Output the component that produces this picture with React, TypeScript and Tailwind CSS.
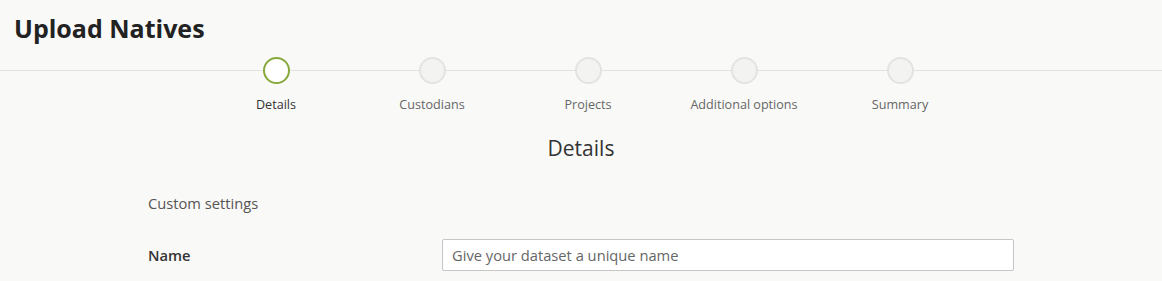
export default function App() {
  const steps = ["Details", "Custodians", "Projects", "Additional options", "Summary"];
  return (
    <div className="min-h-[281px] w-full bg-[#f9f9f8] text-[#333]" style={{ fontFamily: '"Open Sans", sans-serif' }}>
      <div className="h-[71px] border-b border-[#e1e1df] pl-[14px] pt-[11px]">
        <h1 className="text-[25px] font-bold leading-[34px] text-[#222]">Upload Natives</h1>
      </div>
      <div className="-mt-[14px] ml-[198px] flex">
        {steps.map((s, i) => (
          <div key={s} className="flex w-[156px] flex-col items-center">
            <div
              className={
                i === 0
                  ? "h-[27px] w-[27px] rounded-full border-2 border-[#87a83b] bg-white"
                  : "h-[27px] w-[27px] rounded-full border-2 border-[#e3e3e2] bg-[#f3f3f2]"
              }
            />
            <div className={i === 0 ? "mt-[13px] text-[12.6px] leading-[16px] text-[#333]" : "mt-[13px] text-[12.6px] leading-[16px] text-[#666]"}>
              {s}
            </div>
          </div>
        ))}
      </div>
      <h2 className="mt-[21px] text-center text-[21px] leading-[28px] text-[#333]">Details</h2>
      <div className="mx-auto w-[866px]">
        <div className="mt-[31px] text-[14.7px] leading-[20px] text-[#555]">Custom settings</div>
        <div className="mt-[26px] grid grid-cols-[294px_1fr] items-center">
          <div className="text-[14.7px] font-semibold leading-[20px] text-[#333]">Name</div>
          <div className="flex h-[32px] items-center rounded-[2px] border border-[#c6c6c6] bg-white px-[9px] text-[14.7px] text-[#666]">
            Give your dataset a unique name
          </div>
        </div>
      </div>
    </div>
  );
}
